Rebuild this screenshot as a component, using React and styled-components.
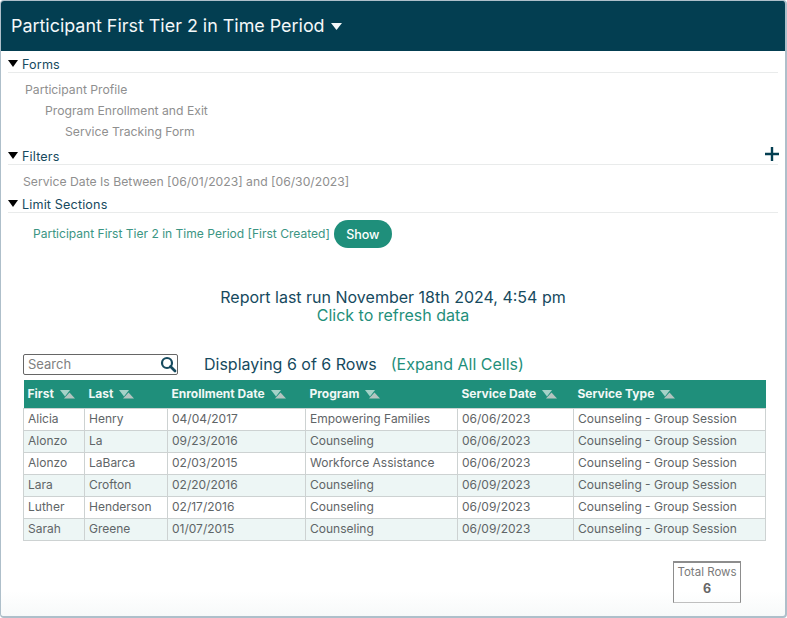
import React from 'react';
import styled, { createGlobalStyle } from 'styled-components';

const GlobalStyle = createGlobalStyle`
  html, body {
    margin: 0;
    padding: 0;
    background: #ffffff;
  }
  body {
    font-family: Inter, "Liberation Sans", sans-serif;
  }
`;

const Frame = styled.div`
  box-sizing: border-box;
  width: 787px;
  height: 618px;
  overflow: hidden;
  background: linear-gradient(#ffffff 590px, #f7f9f9 100%);
  border: 1px solid #aebfca;
  border-width: 1px 2px 2px 1px;
  border-radius: 4px;
  display: flex;
  flex-direction: column;
`;

const TitleBar = styled.header`
  height: 50px;
  flex-shrink: 0;
  background: #033e51;
  color: #f4f8f9;
  display: flex;
  align-items: center;
  padding-left: 10px;
  gap: 6px;
  font-size: 17.9px;
  line-height: 50px;
`;

const Body = styled.main`
  display: flex;
  flex-direction: column;
  padding: 0 7px;
`;

const SectionHead = styled.div`
  height: 22px;
  box-sizing: border-box;
  border-bottom: 1px solid #e9ebeb;
  display: flex;
  align-items: flex-end;
  gap: 4px;
  color: #164a5e;
  font-size: 12.6px;
  letter-spacing: 0.15px;
  line-height: 15px;
  position: relative;
`;

const Caret = styled.span`
  width: 0;
  height: 0;
  border-left: 5.5px solid transparent;
  border-right: 5.5px solid transparent;
  border-top: 7px solid #000000;
  margin-bottom: 5px;
`;

const PlusIcon = styled.svg`
  position: absolute;
  right: -2px;
  top: 3px;
`;

const FormList = styled.div`
  display: flex;
  flex-direction: column;
  padding: 6px 0 1px;
`;

const FormItem = styled.div`
  height: 21px;
  line-height: 21px;
  font-size: 12.2px;
  color: #8f8f8f;
  padding-left: ${(p) => 17 + p.$level * 20}px;
`;

const FilterText = styled.div`
  height: 26px;
  line-height: 34px;
  font-size: 12.2px;
  color: #8f8f8f;
  padding-left: 15px;
`;

const LimitRow = styled.div`
  display: flex;
  align-items: center;
  gap: 4px;
  padding: 7px 0 0 25px;
  font-size: 12.05px;
  color: #3b9583;
`;

const LimitLabel = styled.span`
  margin-bottom: 2px;
`;

const ShowButton = styled.button`
  width: 58px;
  height: 28px;
  border: none;
  border-radius: 14px;
  background: #1f8f7b;
  color: #ffffff;
  font-family: inherit;
  font-size: 12.5px;
  font-weight: 500;
  padding: 0;
`;

const RunInfo = styled.div`
  margin-top: 40px;
  text-align: center;
  font-size: 16px;
  line-height: 18px;
  color: #164a5e;
`;

const RefreshLink = styled.div`
  color: #1f8f7b;
`;

const TableTools = styled.div`
  display: flex;
  align-items: center;
  margin: 29px 0 0 15px;
  height: 22px;
`;

const SearchBox = styled.div`
  box-sizing: border-box;
  width: 155px;
  height: 21px;
  border: 1px solid #666666;
  border-radius: 2px;
  display: flex;
  align-items: center;
  justify-content: space-between;
  padding: 0 0 0 4px;
  font-size: 13px;
  color: #808080;
`;

const SearchIcon = styled.svg`
  display: block;
  margin-right: 0;
`;

const RowCount = styled.span`
  margin-left: 26px;
  font-size: 16px;
  color: #164a5e;
`;

const ExpandLink = styled.span`
  margin-left: 14px;
  font-size: 16px;
  color: #1f8f7b;
`;

const Table = styled.table`
  margin: 5px 0 0 15px;
  width: 742px;
  border-collapse: collapse;
  table-layout: fixed;
  font-size: 12px;
`;

const Th = styled.th`
  height: 26px;
  padding: 0 0 2px 4px;
  background: #1f8f7b;
  color: #f1f8f6;
  text-align: left;
  font-weight: 700;
  white-space: nowrap;
`;

const SortGlyph = styled.svg`
  margin-left: 6px;
  vertical-align: -1px;
`;

const Tr = styled.tr`
  background: ${(p) => (p.$alt ? '#edf6f5' : '#ffffff')};
`;

const Td = styled.td`
  height: 19px;
  padding: 0 0 2px 4px;
  border: 1px solid #cdd2d2;
  color: #5f6567;
  white-space: nowrap;
  overflow: hidden;
`;

const TotalWrap = styled.div`
  display: flex;
  justify-content: flex-end;
  margin: 20px 37px 0 0;
`;

const TotalBox = styled.div`
  box-sizing: border-box;
  width: 68px;
  height: 42px;
  border: 1px solid #8d8d8d;
  border-top-width: 2px;
  border-bottom-color: #bfbfbf;
  text-align: center;
  color: #7a7a7a;
  font-size: 11.5px;
  padding-top: 2px;
  line-height: 14px;
`;

const TotalValue = styled.div`
  margin-top: 3px;
  font-size: 12.5px;
  font-weight: 700;
  color: #666666;
`;

const columns = [
  { label: 'First', width: 61 },
  { label: 'Last', width: 83 },
  { label: 'Enrollment Date', width: 138 },
  { label: 'Program', width: 152 },
  { label: 'Service Date', width: 116 },
  { label: 'Service Type', width: 192 },
];

const rows = [
  ['Alicia', 'Henry', '04/04/2017', 'Empowering Families', '06/06/2023'],
  ['Alonzo', 'La', '09/23/2016', 'Counseling', '06/06/2023'],
  ['Alonzo', 'LaBarca', '02/03/2015', 'Workforce Assistance', '06/06/2023'],
  ['Lara', 'Crofton', '02/20/2016', 'Counseling', '06/09/2023'],
  ['Luther', 'Henderson', '02/17/2016', 'Counseling', '06/09/2023'],
  ['Sarah', 'Greene', '01/07/2015', 'Counseling', '06/09/2023'],
];

const Section = ({ children }) => (
  <SectionHead>
    <Caret />
    {children}
  </SectionHead>
);

const Sort = () => (
  <SortGlyph width="15" height="9" viewBox="0 0 15 9">
    <path d="M4 8.500L9.500 2.500 15 8.500z" fill="#b4c4c0" />
    <path d="M0 0h10L5 6.500z" fill="#a5d2c8" />
  </SortGlyph>
);

export default function App() {
  return (
    <>
      <GlobalStyle />
      <Frame>
        <TitleBar>
          Participant First Tier 2 in Time Period
          <svg width="11" height="7" viewBox="0 0 11 7">
            <path d="M0 0h11L5.500 7z" fill="#f4f8f9" />
          </svg>
        </TitleBar>
        <Body>
          <Section>Forms</Section>
          <FormList>
            <FormItem $level={0}>Participant Profile</FormItem>
            <FormItem $level={1}>Program Enrollment and Exit</FormItem>
            <FormItem $level={2}>Service Tracking Form</FormItem>
          </FormList>
          <Section>
            Filters
            <PlusIcon width="16" height="16" viewBox="0 0 16 16">
              <path d="M6.800 1h2.400v5.800H15v2.400H9.200V15H6.800V9.200H1V6.800h5.800z" fill="#033e51" />
            </PlusIcon>
          </Section>
          <FilterText>Service Date Is Between [06/01/2023] and [06/30/2023]</FilterText>
          <Section>Limit Sections</Section>
          <LimitRow>
            <LimitLabel>Participant First Tier 2 in Time Period [First Created]</LimitLabel>
            <ShowButton>Show</ShowButton>
          </LimitRow>
          <RunInfo>
            Report last run November 18th 2024, 4:54 pm
            <RefreshLink>Click to refresh data</RefreshLink>
          </RunInfo>
          <TableTools>
            <SearchBox>
              Search
              <SearchIcon width="18" height="18" viewBox="0 0 18 18">
                <circle cx="8" cy="8" r="5" fill="none" stroke="#164a5e" strokeWidth="2.200" />
                <path d="M11.500 11.500L16 16" stroke="#164a5e" strokeWidth="2.800" strokeLinecap="round" />
              </SearchIcon>
            </SearchBox>
            <RowCount>Displaying 6 of 6 Rows</RowCount>
            <ExpandLink>(Expand All Cells)</ExpandLink>
          </TableTools>
          <Table>
            <colgroup>
              {columns.map((col) => (
                <col key={col.label} style={{ width: col.width }} />
              ))}
            </colgroup>
            <thead>
              <tr>
                {columns.map((col) => (
                  <Th key={col.label}>
                    {col.label}
                    <Sort />
                  </Th>
                ))}
              </tr>
            </thead>
            <tbody>
              {rows.map((row, i) => (
                <Tr key={row[0] + row[1]} $alt={i % 2 === 1}>
                  {row.map((cell, j) => (
                    <Td key={j}>{cell}</Td>
                  ))}
                  <Td>Counseling - Group Session</Td>
                </Tr>
              ))}
            </tbody>
          </Table>
          <TotalWrap>
            <TotalBox>
              Total Rows
              <TotalValue>6</TotalValue>
            </TotalBox>
          </TotalWrap>
        </Body>
      </Frame>
    </>
  );
}
